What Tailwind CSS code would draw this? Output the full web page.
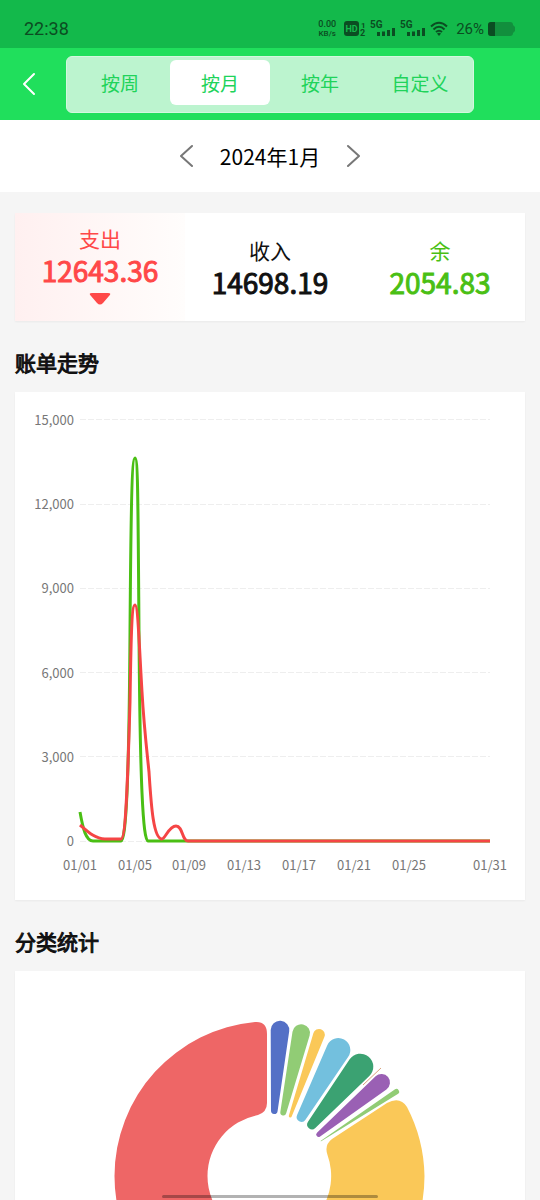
<!DOCTYPE html>
<html lang="zh-CN">
<head>
    <meta charset="UTF-8">
    <meta name="viewport" content="width=device-width, initial-scale=1.0">
    <title>账单统计</title>
    <script src="https://cdn.jsdelivr.net/npm/@tailwindcss/browser@4"></script>
</head>
<body class="h-screen overflow-hidden flex flex-col bg-[#f5f5f5] text-[#111] font-['Noto_Sans_CJK_SC',sans-serif]">
    <!-- Status bar -->
    <div class="h-12 shrink-0 bg-[#13b94b] text-[#0b4d22] pl-6 pr-6 pt-[10px] flex items-center justify-between font-[Roboto,sans-serif]">
        <div class="text-lg">22:38</div>
        <div class="flex items-center">
            <div class="text-[8px] leading-[9px] font-medium text-center mr-2">
                <div class="text-[9px]">0.00</div>
                <div>KB/s</div>
            </div>
            <svg class="w-[22px] h-4 mr-1 overflow-visible" viewBox="0 0 22 16" fill="currentColor">
                <rect x="0" y="0" width="15" height="15" rx="3"/>
                <text x="7.500" y="11" font-size="9" font-weight="700" fill="#13b94b" text-anchor="middle">HD</text>
                <text x="17" y="7" font-size="8" font-weight="700">1</text>
                <text x="16" y="15" font-size="9" font-weight="700">2</text>
            </svg>
            <svg class="w-[26px] h-4 mr-1 overflow-visible" viewBox="0 0 26 16" fill="currentColor">
                <text x="0" y="7" font-size="10" font-weight="700">5G</text>
                <path d="M7 11h3v4H7zM12 10.500h3V15h-3zM17 9h3v6h-3zM22 7h3v8h-3z"/>
            </svg>
            <svg class="w-[26px] h-4 mr-1 overflow-visible" viewBox="0 0 26 16" fill="currentColor">
                <text x="0" y="7" font-size="10" font-weight="700">5G</text>
                <path d="M7 11h3v4H7zM12 10.500h3V15h-3zM17 9h3v6h-3zM22 7h3v8h-3z"/>
            </svg>
            <svg class="w-[18px] h-4 mr-2" viewBox="0 0 18 16" fill="none" stroke="currentColor" stroke-width="2">
                <path d="M1 5.500Q9-2 17 5.500M3.500 8.500Q9 3 14.500 8.500M6 11Q9 8.500 12 11"/>
                <path d="M7 12.500Q9 11 11 12.500L9 15z" fill="currentColor" stroke="none"/>
            </svg>
            <div class="text-[15px] leading-4 mr-1">26%</div>
            <svg class="w-7 h-4" viewBox="0 0 28 16">
                <path d="M3 1H22Q25 1 25 4L27 6V10L25 12Q25 15 22 15H3Q0 15 0 12V4Q0 1 3 1Z" fill="#128f3d"/>
                <path d="M7 1H3Q0 1 0 4V12Q0 15 3 15H7Z" fill="#0b4d22"/>
            </svg>
        </div>
    </div>

    <!-- Header with period tabs -->
    <header class="h-[72px] shrink-0 bg-[#20df5c] flex items-center pr-[66px]">
        <button class="w-[66px] h-full flex items-center pl-[22px]" aria-label="返回">
            <svg class="w-4 h-6" viewBox="0 0 16 24" fill="none" stroke="#fff" stroke-width="2" stroke-linecap="round" stroke-linejoin="round">
                <path d="M12 2L2 12L12 22"/>
            </svg>
        </button>
        <nav class="flex-1 h-[57px] rounded-md bg-[#bcf4cf] border border-[#d3f8df] px-[3px] pt-[3px] grid grid-cols-4 text-[19px] text-[#20d35a]">
            <button class="h-[45px] pt-[3px] rounded-md">按周</button>
            <button class="h-[45px] pt-[3px] rounded-md bg-white">按月</button>
            <button class="h-[45px] pt-[3px] rounded-md">按年</button>
            <button class="h-[45px] pt-[3px] rounded-md">自定义</button>
        </nav>
    </header>

    <!-- Month switcher -->
    <div class="h-[72px] shrink-0 bg-white flex items-center justify-center gap-6 text-[21px] text-black">
        <button aria-label="上个月">
            <svg class="w-4 h-6" viewBox="0 0 16 24" fill="none" stroke="#777" stroke-width="2" stroke-linecap="round" stroke-linejoin="round">
                <path d="M12 2L1 12L12 22"/>
            </svg>
        </button>
        <div class="pt-[2px]">2024年1月</div>
        <button aria-label="下个月">
            <svg class="w-4 h-6" viewBox="0 0 16 24" fill="none" stroke="#777" stroke-width="2" stroke-linecap="round" stroke-linejoin="round">
                <path d="M4 2L15 12L4 22"/>
            </svg>
        </button>
    </div>

    <main class="flex-1 min-h-0 overflow-hidden px-[15px] pt-[21px]">
        <!-- Totals -->
        <div class="h-[108px] bg-white shadow-xs grid grid-cols-3 text-center leading-8 text-[21px] pb-[2px]">
            <div class="-mb-[2px] pb-[2px] flex flex-col justify-center text-[#ff4848] bg-linear-to-r from-[#fff0f0] to-[#fffdfc]">
                <div>支出</div>
                <div class="text-[28px] [-webkit-text-stroke:1px]">12643.36</div>
                <svg class="w-6 h-6 mx-auto" viewBox="0 0 24 24" fill="currentColor">
                    <path d="M4 7H20Q24 7 21 10L15 17Q12 20 9 17L3 10Q0 7 4 7Z"/>
                </svg>
            </div>
            <div class="flex flex-col justify-center">
                <div>收入</div>
                <div class="text-[28px] [-webkit-text-stroke:1px]">14698.19</div>
            </div>
            <div class="flex flex-col justify-center text-[#4abf14]">
                <div>余</div>
                <div class="text-[28px] [-webkit-text-stroke:1px]">2054.83</div>
            </div>
        </div>

        <h2 class="mt-[25px] mb-[14px] text-[21px] leading-8 [-webkit-text-stroke:1px]">账单走势</h2>
        <div class="bg-white shadow-xs">
            <svg class="block w-full" viewBox="0 0 510 508" fill="none">
                <g stroke="#eee" stroke-dasharray="6 2">
                    <path d="M65 27.500H475M65 112.500H475M65 196.500H475M65 280.500H475M65 364.500H475M65 449.500H475"/>
                </g>
                <g fill="#777" font-size="13" text-anchor="end">
                    <text x="59" y="33">15,000</text>
                    <text x="59" y="117">12,000</text>
                    <text x="59" y="201">9,000</text>
                    <text x="59" y="286">6,000</text>
                    <text x="59" y="370">3,000</text>
                    <text x="59" y="454">0</text>
                </g>
                <g fill="#777" font-size="13" text-anchor="middle">
                    <text x="65" y="478">01/01</text>
                    <text x="120" y="478">01/05</text>
                    <text x="174" y="478">01/09</text>
                    <text x="229" y="478">01/13</text>
                    <text x="284" y="478">01/17</text>
                    <text x="339" y="478">01/21</text>
                    <text x="394" y="478">01/25</text>
                    <text x="475" y="478">01/31</text>
                </g>
                <!-- income, then expense -->
                <g stroke-width="3" stroke-linejoin="round">
                    <path stroke="#4abf14" d="M65 420C68 437 71 449 78 449H106C111 449 114 390 115 240C116 110 117 66 120 66C123 66 123 110 124 240C125 390 128 449 133 449H475"/>
                    <path stroke="#f54545" d="M65 433C72 439 80 447 90 447H106C111 447 113 380 115 310C116 240 117 213 120 213C123 213 124 250 127 300C129 335 132 360 134 380C136 410 138 447 147 447C150 447 154 434 161 434C168 434 167 449 173 449H475"/>
                </g>
            </svg>
        </div>

        <h2 class="mt-[25px] mb-[14px] text-[21px] leading-8 [-webkit-text-stroke:1px]">分类统计</h2>
        <div class="bg-white shadow-xs">
            <svg class="block w-full" viewBox="0 0 510 420">
                <path fill="#ee6666" d="M240 51Q252 50 252 63V132Q252 141 243 144A62 62 0 0 0 192.500 205A62 62 0 0 0 254.500 267V360A155 155 0 0 1 99.500 205A155 155 0 0 1 240 51Z"/>
                <path fill="#fac858" d="M317 168L372 132Q385 125 392 136A155 155 0 0 1 409.500 205A155 155 0 0 1 254.500 360V267A62 62 0 0 0 312.500 184Q309 174 317 168Z"/>
                <path stroke="#d9a27c" d="M348 114L366 97"/>
                <g id="slices"></g>
            </svg>
        </div>
    </main>

    <!-- Home indicator -->
    <div class="fixed bottom-[2px] left-1/2 -translate-x-1/2 w-2/5 h-[3px] rounded-full bg-black/30"></div>

    <script>
        // outer x, y, radius, inner x, y, radius, colour
        const slices = [
            [265, 59, 9.3, 259.3, 139.7, 3.3, '#5470c6'],
            [286.2, 62, 8.8, 268.3, 141.5, 3, '#91cc75'],
            [304, 63.7, 5.8, 275.3, 145, 1.5, '#fac858'],
            [323.3, 79, 12, 286.5, 146, 4.8, '#73c0de'],
            [345.3, 95.7, 13, 297, 153.5, 4.8, '#3ba272'],
            [366.5, 111.5, 8.5, 303.7, 163.5, 2.5, '#9a60b4'],
            [381.3, 120.7, 2.8, 306, 170, 0.3, '#91cc75'],
        ];

        function taper([x1, y1, r1, x2, y2, r2]) {
            const a = Math.atan2(y2 - y1, x2 - x1);
            const b = Math.acos((r1 - r2) / Math.hypot(x2 - x1, y2 - y1));
            const at = (x, y, r, t) => `${x + r * Math.cos(t)} ${y + r * Math.sin(t)}`;
            return `M${at(x1, y1, r1, a + b)}L${at(x2, y2, r2, a + b)}` +
                `A${r2} ${r2} 0 0 0 ${at(x2, y2, r2, a - b)}` +
                `L${at(x1, y1, r1, a - b)}A${r1} ${r1} 0 1 0 ${at(x1, y1, r1, a + b)}Z`;
        }

        document.getElementById('slices').innerHTML = slices
            .map(s => `<path fill="${s[6]}" d="${taper(s)}"/>`)
            .join('');
    </script>
</body>
</html>
